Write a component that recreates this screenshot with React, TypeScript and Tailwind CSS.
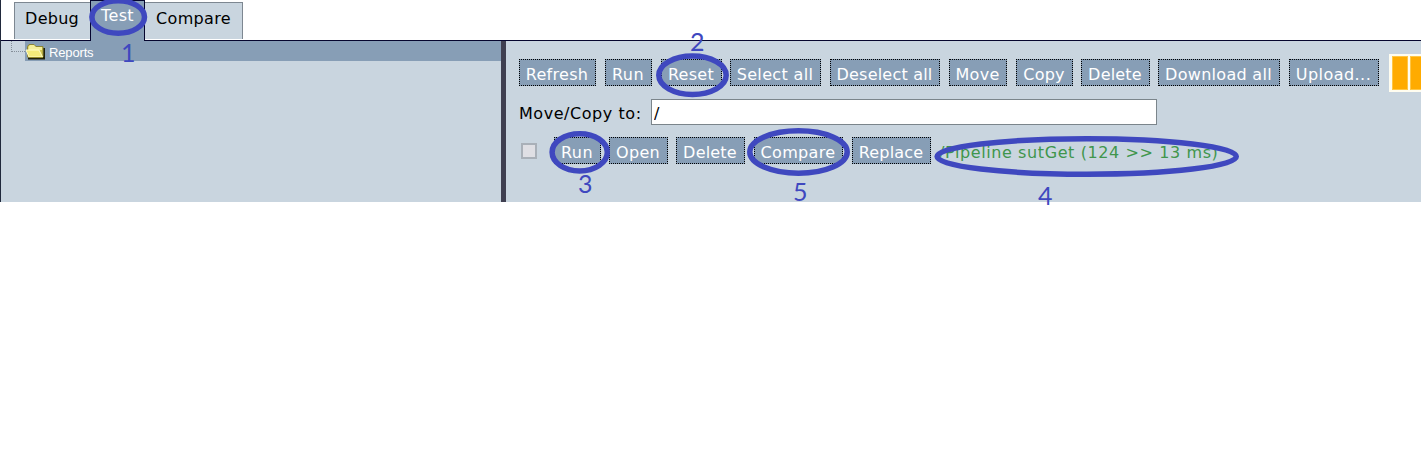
import type { ReactNode } from "react";

const actionButtons = [
  { label: "Refresh", cls: "w-[77px] mr-[9px] tracking-[0.3px]" },
  { label: "Run", cls: "w-[47px] mr-[9px] tracking-[0.4px]" },
  { label: "Reset", cls: "w-[61px] mr-[8px] tracking-[0.3px]" },
  { label: "Select all", cls: "w-[91px] mr-[9px] tracking-[0.35px]" },
  { label: "Deselect all", cls: "w-[110px] mr-[9px] tracking-[0.2px]" },
  { label: "Move", cls: "w-[58px] mr-[9px] tracking-[0.3px]" },
  { label: "Copy", cls: "w-[57px] mr-[8px] tracking-[0.2px]" },
  { label: "Delete", cls: "w-[69px] mr-[8px] tracking-[0.2px]" },
  { label: "Download all", cls: "w-[122px] mr-[9px] tracking-[0.3px]" },
  { label: "Upload...", cls: "w-[90px] mr-[10px] tracking-[0.45px]" },
];

const reportButtons = [
  { label: "Run", cls: "w-[47px] mr-[8px] tracking-[0.4px]" },
  { label: "Open", cls: "w-[59px] mr-[8px] tracking-[0.3px]" },
  { label: "Delete", cls: "w-[69px] mr-[9px] tracking-[0.2px]" },
  { label: "Compare", cls: "w-[89px] mr-[9px] tracking-[0.35px]" },
  { label: "Replace", cls: "w-[79px] mr-[8px] tracking-[0.2px]" },
];

const ellipses = [
  { cx: 118.2, cy: 17, rx: 26.3, ry: 16.3 },
  { cx: 692.5, cy: 75.2, rx: 33.7, ry: 19.2 },
  { cx: 579.7, cy: 152.3, rx: 27.6, ry: 18.6 },
  { cx: 798.5, cy: 152, rx: 48.7, ry: 21.2 },
  { cx: 1086.7, cy: 156.5, rx: 149.6, ry: 17.7 },
];

const digits = [
  { n: "1", x: 121, y: 62 },
  { n: "2", x: 690, y: 51 },
  { n: "3", x: 578, y: 193 },
  { n: "4", x: 1038, y: 205 },
  { n: "5", x: 793, y: 201 },
];

function Button({ cls, children }: { cls: string; children: ReactNode }) {
  return (
    <button
      className={`flex h-[27px] shrink-0 items-center justify-center whitespace-nowrap border border-dotted border-black bg-[#879eb6] pt-[4px] pr-[1px] text-white ${cls}`}
    >
      {children}
    </button>
  );
}

function Folder() {
  return (
    <svg width="21" height="17" viewBox="0 0 21 17" className="shrink-0">
      <path d="M3 15.5h16V5" fill="none" stroke="#20200c" strokeWidth="2" />
      <path d="M2.5 14V3.5l1.5-2h5l2 2h7V14z" fill="#cfc450" stroke="#8c8537" />
      <path d="M3.5 4l1.5-2h4l1.5 2H17v3H3.5z" fill="#f5ef9a" />
      <path d="M1 7h13l3.5 7H4z" fill="#f3ea7a" stroke="#fffbc8" />
      <path d="M4 14.5h14" stroke="#938a28" />
    </svg>
  );
}

export default function App() {
  return (
    <div className="relative h-[466px] w-[1421px] overflow-hidden bg-white font-['DejaVu_Sans',sans-serif] text-[16px] leading-[20px] text-black">
      <div className="flex h-[202px] flex-col border-l border-[#20293c]">
        <nav className="flex h-[41px] shrink-0 items-start border-b border-[#05052e] pl-[13px]">
          <div className="mt-[2px] flex h-[37px] w-[76px] items-center justify-center border border-r-0 border-b-0 border-[#7d8791] bg-[#c9d5df] pr-[1px] pb-[4px] tracking-[0.25px]">
            Debug
          </div>
          <div className="-mb-px flex h-[41px] w-[55px] shrink-0 items-start justify-center border-x border-t border-[#05052e] bg-[#879eb6] pt-[5px] text-white tracking-[0.4px]">
            Test
          </div>
          <div className="mt-[2px] flex h-[37px] w-[98px] items-center justify-center border border-b-0 border-l-0 border-[#7d8791] bg-[#c9d5df] pb-[4px] tracking-[0.35px]">
            Compare
          </div>
        </nav>
        <main className="flex h-[161px] bg-[#c9d5df]">
          <aside className="w-[500px] shrink-0">
            <div className="flex h-[20px]">
              <div className="ml-[10px] h-[11px] w-[14px] border-b border-l border-dotted border-[#858f99]" />
              <div className="flex flex-1 items-center bg-[#879eb6] font-['Liberation_Sans',sans-serif] text-[13px] tracking-[-0.15px] text-white">
                <Folder />
                <span className="ml-[3px] pt-[3px]">Reports</span>
              </div>
            </div>
          </aside>
          <div className="w-[5px] shrink-0 bg-[#3f3f50]" />
          <section className="min-w-0 flex-1 overflow-hidden pl-[13px]">
            <div className="flex h-[58px] items-start pt-[13px]">
              <div className="flex pt-[5px]">
                {actionButtons.map((b) => (
                  <Button key={b.label} cls={b.cls}>
                    {b.label}
                  </Button>
                ))}
              </div>
              <div className="flex h-[38px] w-[60px] shrink-0 gap-[2px] bg-[#fffdf0] p-[2px] pl-[3px]">
                <div className="w-[16px] border border-[#ffc645] bg-[#ffab00]" />
                <div className="w-[16px] border border-[#ffc645] bg-[#ffab00]" />
                <div className="w-[16px] border border-[#ffc645] bg-[#ffab00]" />
              </div>
            </div>
            <div className="flex h-[26px] items-center">
              <label htmlFor="destination" className="w-[132px] pt-[3px] tracking-[0.55px] whitespace-nowrap">
                Move/Copy to:
              </label>
              <input
                id="destination"
                defaultValue="/"
                className="h-[26px] w-[506px] border border-[#7b858b] bg-white pt-[3px] pl-[2px] outline-none"
              />
            </div>
            <div className="flex pt-[12px]">
              <div className="mt-[6px] mr-[17px] ml-[2px] h-[16px] w-[16px] border-2 border-[#a9b0b8] bg-[#dfdfe4]" />
              {reportButtons.map((b) => (
                <Button key={b.label} cls={b.cls}>
                  {b.label}
                </Button>
              ))}
              <span className="pt-[6px] tracking-[0.6px] whitespace-nowrap text-[#40964c]">
                /Pipeline sutGet (124 &gt;&gt; 13 ms)
              </span>
            </div>
          </section>
        </main>
      </div>
      <svg className="pointer-events-none absolute inset-0" width="1421" height="466">
        {ellipses.map((e) => (
          <ellipse key={e.cx} {...e} fill="none" stroke="#3f48bf" strokeWidth="5.5" />
        ))}
        {digits.map((d) => (
          <text key={d.n} x={d.x} y={d.y} fill="#3f48bf" className="font-['Lato',sans-serif] text-[25px]">
            {d.n}
          </text>
        ))}
      </svg>
    </div>
  );
}
